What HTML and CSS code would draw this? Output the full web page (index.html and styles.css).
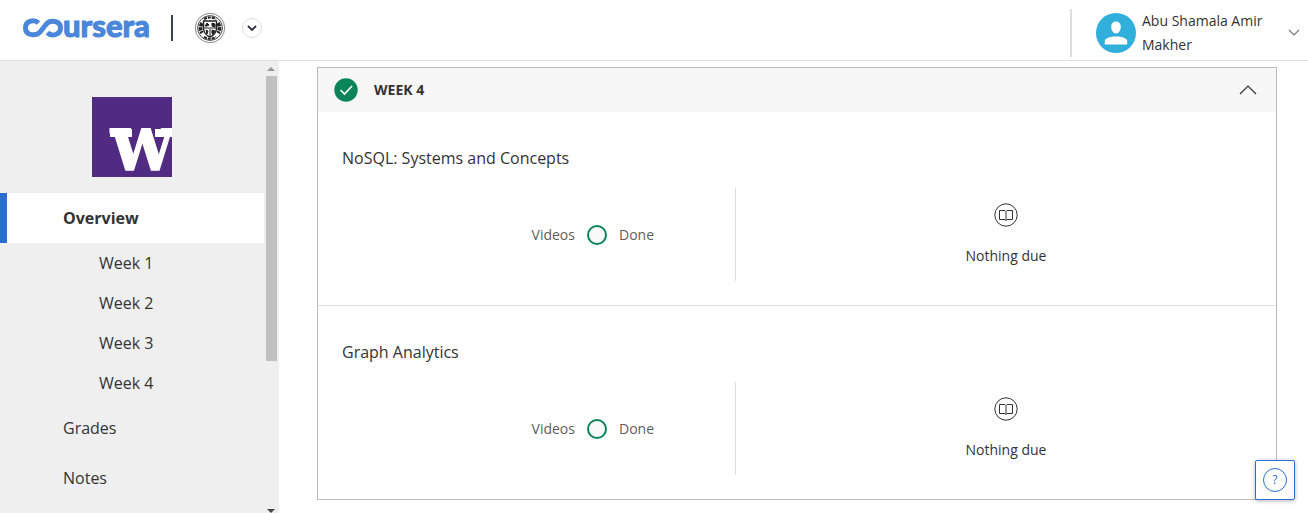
FILE: index.html
```html
<!DOCTYPE html>
<html lang="en">
<head>
<meta charset="utf-8">
<meta name="viewport" content="width=device-width, initial-scale=1">
<title>Week 4 | Coursera</title>
<link rel="stylesheet" href="styles.css">
</head>
<body>
<header class="topbar">
  <a class="brand" href="#" aria-label="Coursera home">
    <svg width="132" height="44" viewBox="0 0 132 44">
      <path class="brand-loop" d="M16.500 17C12.500 13 3.500 14.500 3.500 22C3.500 30 14.500 30.500 18.500 25.500L24 18.500C28 13.500 38.500 14.500 38.500 22C38.500 29.500 29 30.500 25.500 26.500"/>
      <text class="brand-text" x="41" y="31">ursera</text>
    </svg>
  </a>
  <span class="brand-divider"></span>
  <a class="seal" href="#" aria-label="Institution">
    <svg width="32" height="32" viewBox="0 0 32 32" fill="none" stroke="#222">
      <circle cx="16" cy="16" r="14.700" stroke="#888" stroke-width="1"/>
      <circle cx="16" cy="16" r="12.400" stroke="#444" stroke-width="1"/>
      <path d="M8 11q-3 5 0 10M24 11q3 5 0 10" stroke-width="3.600" stroke-dasharray="3.500 .8"/>
      <path d="M10 7q6-3 12 0M10 25q6 3.500 12 0" stroke-width="2.200" stroke-dasharray="3 1"/>
      <path d="M9.500 9h13v8q-1 6-6.500 8q-5.500-2-6.500-8z" fill="#fff" stroke-width="1.400"/>
      <path d="M10 16h12M16 17v7" stroke-width="1"/>
      <path d="M11 14l2-3 2 2-2 1zM18 11l3 1 0 3-3-1zM12 18l2 1-1 3zM18 18l3 1-2 4-1-2z" fill="#222" stroke-width="1"/>
    </svg>
  </a>
  <button class="round-btn" type="button" aria-label="Switch program">
    <svg width="10" height="6" viewBox="0 0 10 6"><path d="M1 1l4 4 4-4" fill="none" stroke="#2b2f3a" stroke-width="1.800"/></svg>
  </button>
  <button class="account" type="button">
    <svg class="avatar" width="40" height="40" viewBox="0 0 40 40">
      <circle cx="20" cy="20" r="20" fill="#30afdb"/>
      <path d="M20 8.500c3 0 4.800 2 4.800 5c0 4-2 7-4.800 7s-4.800-3-4.800-7c0-3 1.800-5 4.800-5zM8.800 31.500v-3.500c0-2.500 5-4.500 11.200-4.500s11.200 2 11.200 4.500v3.500z" fill="#fff"/>
    </svg>
    <span class="account-name">Abu Shamala Amir Makher</span>
    <svg class="account-caret" width="12" height="8" viewBox="0 0 12 8"><path d="M1 1l5 5 5-5" fill="none" stroke="#777" stroke-width="1.200"/></svg>
  </button>
</header>
<div class="layout">
  <aside class="sidebar">
    <div class="sidebar-content">
      <svg class="school" width="80" height="80" viewBox="0 0 80 80" role="img" aria-label="University of Washington">
        <rect width="80" height="80" fill="#512b82"/>
        <text class="school-letter" x="19" y="73">W</text>
        <path d="M18 32h22v8h-22zM63 32h17v8h-17z" fill="#fff"/>
      </svg>
      <nav class="nav">
        <a class="nav-item active" href="#">Overview</a>
        <a class="nav-week" href="#">Week 1</a>
        <a class="nav-week" href="#">Week 2</a>
        <a class="nav-week" href="#">Week 3</a>
        <a class="nav-week" href="#">Week 4</a>
        <a class="nav-item" href="#">Grades</a>
        <a class="nav-item" href="#">Notes</a>
      </nav>
    </div>
    <div class="scrollbar" aria-hidden="true">
      <span class="arrow-up"></span>
      <span class="thumb"></span>
      <span class="arrow-down"></span>
    </div>
  </aside>
  <main class="main">
    <section class="card">
      <button class="card-head" type="button" aria-expanded="true">
        <svg width="24" height="24" viewBox="0 0 24 24"><circle cx="12" cy="12" r="11.700" fill="#0a8458"/><path d="M6.500 12l4 4 7.500-8" fill="none" stroke="#fff" stroke-width="1.600"/></svg>
        <span class="card-title">WEEK 4</span>
        <svg width="18" height="10" viewBox="0 0 18 10"><path d="M1 9l8-8 8 8" fill="none" stroke="#333" stroke-width="1.200"/></svg>
      </button>
      <article class="module">
        <h2 class="module-title">NoSQL: Systems and Concepts</h2>
        <div class="module-row">
          <div class="progress"><span>Videos</span><span class="ring"></span><span>Done</span></div>
          <div class="due">
            <svg width="24" height="24" viewBox="0 0 24 24" fill="none" stroke="#333"><circle cx="12" cy="12" r="11.200"/><path d="M12 8.500L11 7.500H5.500V16.500H11L12 17.500L13 16.500H18.500V7.500H13zV17.500"/></svg>
            <span>Nothing due</span>
          </div>
        </div>
      </article>
      <article class="module">
        <h2 class="module-title">Graph Analytics</h2>
        <div class="module-row">
          <div class="progress"><span>Videos</span><span class="ring"></span><span>Done</span></div>
          <div class="due">
            <svg width="24" height="24" viewBox="0 0 24 24" fill="none" stroke="#333"><circle cx="12" cy="12" r="11.200"/><path d="M12 8.500L11 7.500H5.500V16.500H11L12 17.500L13 16.500H18.500V7.500H13zV17.500"/></svg>
            <span>Nothing due</span>
          </div>
        </div>
      </article>
    </section>
  </main>
</div>
<button class="help" type="button" aria-label="Help"><span class="help-mark">?</span></button>
</body>
</html>
```
FILE: styles.css
```css
* { box-sizing: border-box; }
body {
  margin: 0;
  height: 100vh;
  display: flex;
  flex-direction: column;
  overflow: hidden;
  background: #fff;
  color: #333;
  font-family: "Open Sans", "Noto Sans", sans-serif;
  font-size: 16px;
  line-height: 24px;
}
a { color: inherit; text-decoration: none; }
button { font: inherit; color: inherit; background: none; border: 0; padding: 0; cursor: pointer; }
svg { display: block; flex: none; }

.topbar {
  flex: none;
  display: flex;
  align-items: center;
  height: 61px;
  padding: 0 8px 4px 22px;
  border-bottom: 1px solid #dedede;
}
.brand-loop { fill: none; stroke: #4a86da; stroke-width: 5; }
.brand-text { font: 900 31px Lato, sans-serif; fill: #4a86da; stroke: #4a86da; stroke-width: 1; }
.brand-divider { width: 2px; height: 26px; margin-left: 17px; background: #3c4150; }
.seal { margin-left: 21px; }
.round-btn {
  display: flex;
  align-items: center;
  justify-content: center;
  width: 20px;
  height: 20px;
  margin-left: 16px;
  border: 1px solid #ddd;
  border-radius: 50%;
}
.account {
  display: flex;
  align-items: center;
  height: 48px;
  margin-top: 9px;
  margin-left: auto;
  padding-left: 24px;
  border-left: 2px solid #dedede;
  font-size: 14px;
  text-align: left;
}
.account-name { width: 140px; margin-left: 6px; }
.account-caret { margin-left: 6px; }

.layout { flex: 1; min-height: 0; display: flex; }
.sidebar {
  flex: none;
  display: flex;
  width: 279px;
  background: #efefef;
}
.sidebar-content { flex: 1; overflow: hidden; padding-top: 36px; }
.school { margin: 0 auto 16px; }
.school-letter { font: bold 56px "DejaVu Serif", serif; fill: #fff; stroke: #fff; stroke-width: 2; }
.nav { display: flex; flex-direction: column; }
.nav-item { padding: 13px 0 13px 63px; }
.nav-week { padding: 8px 0 8px 99px; }
.active {
  padding-left: 56px;
  border-left: 7px solid #2a6fd0;
  background: #fff;
  font-weight: 700;
}
.scrollbar {
  display: flex;
  flex-direction: column;
  align-items: center;
  width: 15px;
  padding: 6px 2px 0 1px;
}
.arrow-up { border: 4px solid transparent; border-top: 0; border-bottom: 4px solid #999; }
.arrow-down { margin-top: auto; border: 4px solid transparent; border-bottom: 0; border-top: 4px solid #444; }
.thumb { width: 11px; height: 285px; margin-top: 5px; background: #c1c1c1; }

.main { flex: 1; min-width: 0; padding: 6px 31px 0 38px; }
.card { border: 1px solid #bbb; }
.card-head {
  display: flex;
  align-items: center;
  width: 100%;
  height: 44px;
  padding: 0 19px 0 16px;
  background: #f7f7f7;
}
.card-title { flex: 1; margin-left: 16px; font-size: 14px; font-weight: 700; text-align: left; }
.module { padding: 34px 0 24px; }
.module + .module { border-top: 1px solid #dedede; }
.module-title { margin: 0 24px 18px; font-size: 16px; font-weight: 400; }
.module-row {
  display: grid;
  grid-template-columns: 417fr 541fr;
  height: 93px;
  font-size: 14px;
}
.progress {
  display: flex;
  align-items: center;
  justify-content: flex-end;
  gap: 12px;
  padding-right: 81px;
  color: #5e5e5e;
}
.ring { width: 20px; height: 20px; border: 2px solid #0a8458; border-radius: 50%; background: #f9f9f9; }
.due {
  display: flex;
  flex-direction: column;
  align-items: center;
  gap: 17px;
  padding-top: 15px;
  border-left: 1px solid #dedede;
}

.help {
  position: fixed;
  right: 13px;
  bottom: 13px;
  display: flex;
  align-items: center;
  justify-content: center;
  width: 40px;
  height: 40px;
  border: 1px solid #2a6fd0;
  border-radius: 2px;
  background: #fff;
  box-shadow: 0 1px 4px rgba(0, 0, 0, 0.3);
  color: #2a6fd0;
}
.help-mark {
  width: 24px;
  height: 24px;
  border: 1px solid #2a6fd0;
  border-radius: 50%;
  font-size: 12px;
  line-height: 22px;
}
```
